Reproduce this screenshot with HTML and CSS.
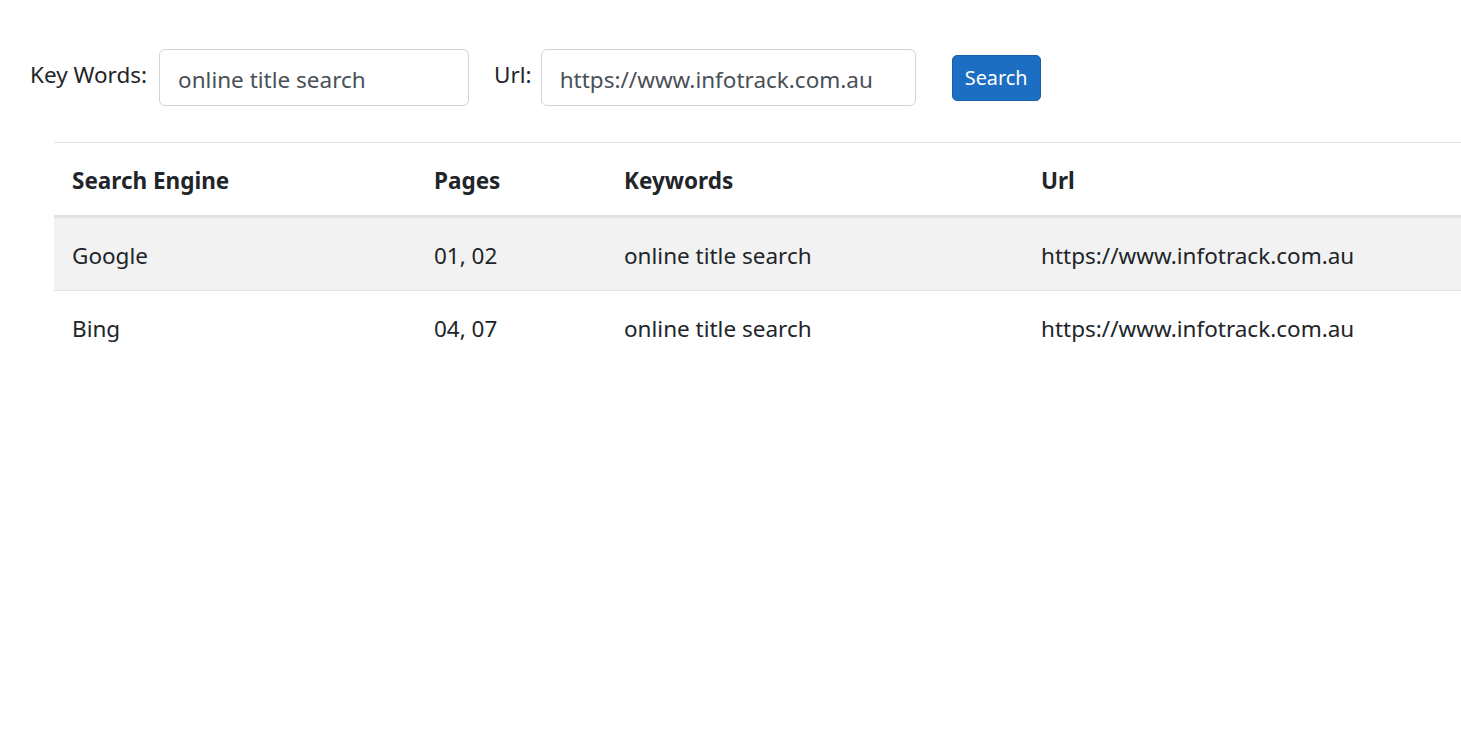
FILE: index.html
```html
<!DOCTYPE html>
<html lang="en">
<head>
<meta charset="utf-8">
<title>Search</title>
<link rel="stylesheet" href="styles.css">
</head>
<body>
<div class="page">
  <form class="search-bar">
    <label class="lbl lbl-kw">Key Words:</label>
    <input class="field field-kw" type="text" value="online title search">
    <label class="lbl lbl-url">Url:</label>
    <input class="field field-url" type="text" value="https://www.infotrack.com.au">
    <button class="btn-search" type="button">Search</button>
  </form>
  <table class="results">
    <thead>
      <tr><th class="c1">Search Engine</th><th class="c2">Pages</th><th class="c3">Keywords</th><th class="c4">Url</th></tr>
    </thead>
    <tbody>
      <tr class="odd"><td>Google</td><td>01, 02</td><td>online title search</td><td>https://www.infotrack.com.au</td></tr>
      <tr><td>Bing</td><td>04, 07</td><td>online title search</td><td>https://www.infotrack.com.au</td></tr>
    </tbody>
  </table>
</div>
</body>
</html>
```
FILE: styles.css
```css
html, body {
  margin: 0;
  padding: 0;
  background: #fff;
}
body {
  font-family: "Segoe UI", "Noto Sans", sans-serif;
  font-size: 22.5px;
  line-height: 36px;
  color: #212529;
  overflow: hidden;
}
.search-bar {
  display: flex;
  align-items: flex-start;
  padding: 49px 0 0 30px;
  margin: 0;
}
.lbl {
  margin-top: 8px;
  white-space: nowrap;
}
.lbl-kw { margin-right: 12px; }
.lbl-url { margin-left: 25px; margin-right: 9px; }
.field {
  box-sizing: border-box;
  height: 57px;
  padding: 11px 18px 7px;
  font: inherit;
  color: #495057;
  background: #fff;
  border: 1.5px solid #ced4da;
  border-radius: 6px;
  outline: none;
}
.field-kw { width: 310px; }
.field-url { width: 375px; }
.btn-search {
  margin-left: 36px;
  margin-top: 6px;
  box-sizing: border-box;
  width: 89px;
  height: 46px;
  padding: 0 10px;
  font-family: inherit;
  font-size: 19.8px;
  line-height: 30px;
  color: #fff;
  background: #1b6ec2;
  border: 1.5px solid #1861ac;
  border-radius: 5px;
}
.results {
  margin: 36px 0 0 54px;
  width: 1407px;
  border-collapse: collapse;
}
.results th, .results td {
  text-align: left;
  padding: 20px 18px 16px;
  line-height: 36px;
  border-top: 1px solid #dee2e6;
  vertical-align: top;
  white-space: nowrap;
}
.results th { font-weight: 700; border-bottom: 3px solid #dee2e6; }
.results .c1 { width: 326px; }
.results .c2 { width: 154px; }
.results .c3 { width: 381px; }
.results tr.odd td { background: #f2f2f2; }
```
